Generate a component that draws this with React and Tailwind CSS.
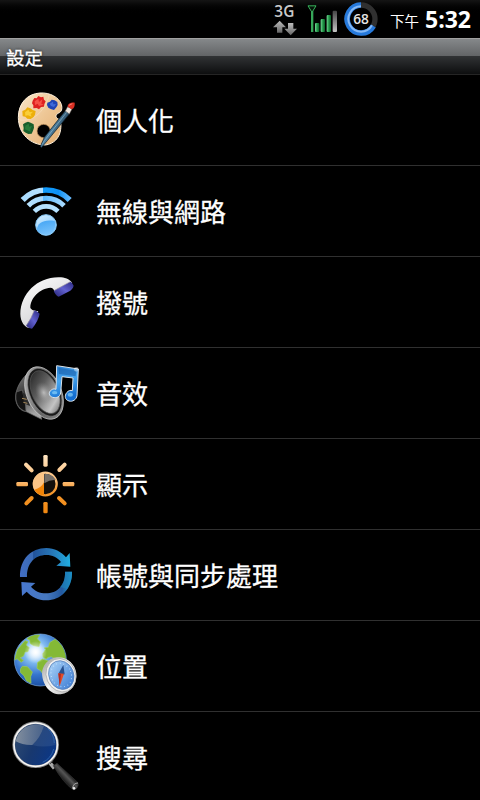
import React from 'react';

function PaletteIcon() {
  return (
    <svg viewBox="0 -15 270 270" className="w-[90px] h-[90px] flex-shrink-0">
      <defs>
        <linearGradient id="wood" x1="0" y1="0" x2="1" y2="1">
          <stop offset="0" stopColor="#fbe7cb" />
          <stop offset="0.5" stopColor="#eec796" />
          <stop offset="1" stopColor="#e3ae70" />
        </linearGradient>
        <linearGradient id="handle" x1="0" y1="0" x2="1" y2="0.6">
          <stop offset="0" stopColor="#1b3a52" />
          <stop offset="0.5" stopColor="#4d7f9f" />
          <stop offset="1" stopColor="#12283b" />
        </linearGradient>
      </defs>
      <path
        d="M120 39C150 37 177 52 184 73C188 87 184 96 176 99C167 103 165 111 173 116C183 121 184 130 182 148C179 174 161 192 136 195C92 195 55 162 55 112C55 70 82 41 120 39Z"
        fill="url(#wood)"
        stroke="#fff1dc"
        strokeWidth="3"
      />
      <path d="M60 120C95 125 133 100 148 44" stroke="#fff3e2" strokeWidth="2" opacity="0.45" fill="none" />
      <circle cx="131" cy="153" r="20" fill="#000" stroke="#c99a62" strokeWidth="2" />
      <path d="M98 62l5-8 7 1 5-7 8 4 7-2 2 9 5 5-4 9-1 7-9 1-6 7-7-4-10 1 0-9-4-6z" fill="#df2020" />
      <path d="M104 64l11-8 2 10 10-8-3 13 7 3-14 4-4-7-8 4z" fill="#ff6555" opacity="0.7" />
      <path d="M142 68l8-3 5-6 9 2 8 5 1 9-4 7-7 8-10-3-7-4-4-8z" fill="#2145b5" />
      <path d="M149 71l10-6 1 8 8-1-6 9-9-3z" fill="#4f7be8" opacity="0.7" />
      <path d="M67 93l9-4 6-7 9 3 7 5 9 3-2 11-4 7-9 6-10-1-6-6-8-1z" fill="#edaf0b" />
      <path d="M75 97l10-8 4 7 10-1-7 8 3 7-11-4-8 1z" fill="#ffdb4d" opacity="0.7" />
      <path d="M69 133l7-5 8-3 8 3 9 5 1 10-3 9-4 9-10 1-8-4-7-5 1-9z" fill="#185e2b" />
      <path d="M76 137l10-6 2 9 8-2-5 10 1 7-10-4-7-3z" fill="#2f8842" opacity="0.7" />
      <path d="M197 91L209 101L143 181L124 203L121 199L133 172Z" fill="url(#handle)" stroke="#0b1620" strokeWidth="2" />
      <path d="M200 97L133 182L126 194" stroke="#a9cfe0" strokeWidth="1.5" fill="none" />
      <path d="M203 80L216 87L208 102L196 93Z" fill="#eee6de" stroke="#6d6460" strokeWidth="1.5" />
      <path d="M203 80C203 70 214 67 224 68C225 77 222 86 215 88Z" fill="#d92f23" />
      <path d="M207 76l10-5" stroke="#ffaa9b" strokeWidth="2" />
    </svg>
  );
}

function WirelessIcon() {
  return (
    <svg viewBox="0 -12 270 270" className="w-[90px] h-[90px] flex-shrink-0">
      <defs>
        <linearGradient id="wave" gradientUnits="userSpaceOnUse" x1="65" y1="0" x2="212" y2="0">
          <stop offset="0" stopColor="#a9dcff" />
          <stop offset="0.43" stopColor="#b5e0ff" />
          <stop offset="0.44" stopColor="#129bfb" />
          <stop offset="0.75" stopColor="#0d91f5" />
          <stop offset="1" stopColor="#68bbff" />
        </linearGradient>
        <linearGradient id="wave2" gradientUnits="userSpaceOnUse" x1="80" y1="0" x2="195" y2="0">
          <stop offset="0" stopColor="#b7e2ff" />
          <stop offset="0.42" stopColor="#a5d9ff" />
          <stop offset="0.43" stopColor="#5dbaff" />
          <stop offset="1" stopColor="#abdcff" />
        </linearGradient>
        <linearGradient id="ball" x1="0" y1="0" x2="0.6" y2="1">
          <stop offset="0" stopColor="#d9f0ff" />
          <stop offset="1" stopColor="#7cc4fb" />
        </linearGradient>
        <linearGradient id="ballShade" x1="0" y1="0" x2="0.4" y2="1">
          <stop offset="0" stopColor="#2b98f2" />
          <stop offset="1" stopColor="#74c0fb" />
        </linearGradient>
      </defs>
      <path d="M68 90A98 98 0 0 1 209 90" strokeWidth="17" stroke="url(#wave)" fill="none" />
      <path d="M85 107A75 75 0 0 1 192 107" strokeWidth="15" stroke="url(#wave2)" fill="none" />
      <path d="M103 124A50 50 0 0 1 174 124" strokeWidth="14" stroke="#b4e1ff" fill="none" />
      <circle cx="138" cy="165" r="31" fill="url(#ball)" stroke="#8accfb" strokeWidth="3" />
      <path d="M110 181C113 158 130 148 164 153C171 171 157 192 138 193C125 193 115 189 110 181Z" fill="url(#ballShade)" opacity="0.85" />
    </svg>
  );
}

function PhoneIcon() {
  return (
    <svg viewBox="0 -9 270 270" className="w-[90px] h-[90px] flex-shrink-0">
      <defs>
        <linearGradient id="receiver" x1="0" y1="0" x2="0.6" y2="1">
          <stop offset="0" stopColor="#fff" />
          <stop offset="1" stopColor="#cfcfd2" />
        </linearGradient>
        <linearGradient id="earTop" x1="0" y1="1" x2="1" y2="0">
          <stop offset="0" stopColor="#242275" />
          <stop offset="0.5" stopColor="#6261cf" />
          <stop offset="1" stopColor="#29287f" />
        </linearGradient>
      </defs>
      <path
        d="M92 204C76 206 61 186 61 162C62 101 112 51 177 52C194 52 208 57 216 68L164 94C161 88 158 83 151 83C120 86 91 112 91 143C93 149 103 153 115 153Z"
        fill="url(#receiver)"
      />
      <path d="M161 92L211 65Q216 66 221 77Q218 89 205 95L176 110Q166 106 161 92Z" fill="url(#earTop)" />
      <path d="M103 151Q112 153 119 161Q115 183 96 206Q87 206 78 197Q94 176 103 151Z" fill="url(#earTop)" />
      <path d="M162 92L211 65M103 151Q94 176 79 197" stroke="#9c96a0" strokeWidth="2" fill="none" />
    </svg>
  );
}

function SoundIcon() {
  return (
    <svg viewBox="0 -6 270 270" className="w-[90px] h-[90px] flex-shrink-0">
      <defs>
        <linearGradient id="cone" x1="0.2" y1="0" x2="0.6" y2="1">
          <stop offset="0" stopColor="#262626" />
          <stop offset="0.4" stopColor="#5c5c5c" />
          <stop offset="0.85" stopColor="#c4c4c4" />
          <stop offset="1" stopColor="#888" />
        </linearGradient>
        <linearGradient id="rim" x1="0" y1="0" x2="1" y2="1">
          <stop offset="0" stopColor="#c5c5c5" />
          <stop offset="0.5" stopColor="#666" />
          <stop offset="1" stopColor="#999" />
        </linearGradient>
        <linearGradient id="frame" x1="0" y1="0" x2="0.3" y2="1">
          <stop offset="0" stopColor="#888" />
          <stop offset="0.5" stopColor="#3a3a3a" />
          <stop offset="1" stopColor="#a5a5a5" />
        </linearGradient>
        <radialGradient id="cap">
          <stop offset="0" stopColor="#c4c4c4" stopOpacity="0.9" />
          <stop offset="1" stopColor="#888" stopOpacity="0" />
        </radialGradient>
        <linearGradient id="note" x1="0" y1="0" x2="0.3" y2="1">
          <stop offset="0" stopColor="#2175c8" />
          <stop offset="0.5" stopColor="#48a7f0" />
          <stop offset="1" stopColor="#146ed0" />
        </linearGradient>
      </defs>
      <path d="M77 76C59 95 45 122 47 148C50 169 63 184 77 184L125 208L95 64Z" fill="url(#frame)" stroke="#777" strokeWidth="2" />
      <path d="M49 126C43 157 55 177 78 185L76 160L67 120Z" fill="#131313" stroke="#666" strokeWidth="2" />
      <path d="M68 128L84 135L90 168L72 160Z" fill="#2b2b2b" />
      <path d="M66 145l14 3M70 157l12 3" stroke="#a88a5a" strokeWidth="3" />
      <g transform="rotate(-24 132 129)">
        <ellipse cx="132" cy="129" rx="52" ry="83" fill="url(#rim)" stroke="#d0d0d0" strokeWidth="2" />
        <ellipse cx="135" cy="128" rx="45" ry="76" fill="#1a1a1a" stroke="#8c8c8c" strokeWidth="1.5" />
        <ellipse cx="136" cy="128" rx="39" ry="68" fill="url(#cone)" stroke="#555" strokeWidth="2" />
        <ellipse cx="132" cy="128" rx="24" ry="34" fill="url(#cap)" />
      </g>
      <path
        d="M170 47L235 57L231 137C229 149 218 156 207 153C195 150 193 137 200 128C206 121 212 120 217 122L219 84L186 80L182 129C180 140 170 145 158 142C145 138 145 126 154 120C159 116 164 116 168 118Z"
        fill="url(#note)"
        stroke="#dce3e9"
        strokeWidth="3"
        strokeLinejoin="round"
      />
      <path d="M175 53L229 62L227 79L177 72Z" fill="#195faa" opacity="0.6" />
      <ellipse cx="164" cy="128" rx="8" ry="5" fill="#99deff" opacity="0.6" />
      <ellipse cx="211" cy="134" rx="8" ry="6" fill="#99deff" opacity="0.6" />
      <circle cx="229" cy="58" r="7" fill="#fff" opacity="0.4" />
    </svg>
  );
}

function DisplayIcon() {
  return (
    <svg viewBox="0 -3 270 270" className="w-[90px] h-[90px] flex-shrink-0">
      <defs>
        <linearGradient id="sun" gradientUnits="userSpaceOnUse" x1="0" y1="45" x2="0" y2="220">
          <stop offset="0" stopColor="#ffe5c2" />
          <stop offset="0.45" stopColor="#fbbc76" />
          <stop offset="0.6" stopColor="#f59a32" />
          <stop offset="1" stopColor="#f08710" />
        </linearGradient>
      </defs>
      <g fill="url(#sun)">
        <rect x="130" y="45" width="13" height="35" rx="4" />
        <rect x="130" y="186" width="13" height="34" rx="4" />
        <rect x="49" y="126" width="35" height="13" rx="4" />
        <rect x="188" y="126" width="35" height="13" rx="4" />
      </g>
      <path
        d="M78 74L95 91M194 74L178 90M95 174L79 190M177 174L194 190"
        fill="none"
        stroke="url(#sun)"
        strokeWidth="12"
        strokeLinecap="round"
      />
      <circle cx="136" cy="132" r="34" fill="#140f0b" stroke="url(#sun)" strokeWidth="7" />
      <path d="M132 98A34 34 0 0 0 132 166Z" fill="#fbc486" />
      <path d="M132 127L132 166A34 34 0 0 1 103 149Q124 144 132 127Z" fill="#f18408" />
      <path d="M133 102C151 101 162 109 167 120Q151 118 133 130Z" fill="#777069" />
    </svg>
  );
}

function SyncIcon() {
  return (
    <svg viewBox="0 -6 270 270" className="w-[90px] h-[90px] flex-shrink-0">
      <defs>
        <linearGradient id="syncTop" x1="0" y1="0" x2="1" y2="0">
          <stop offset="0" stopColor="#426ec5" />
          <stop offset="0.25" stopColor="#3a6bb5" />
          <stop offset="0.27" stopColor="#22529a" />
          <stop offset="0.65" stopColor="#2779b9" />
          <stop offset="1" stopColor="#20aee0" />
        </linearGradient>
        <linearGradient id="syncBottom" x1="0" y1="0" x2="1" y2="0">
          <stop offset="0" stopColor="#4877ce" />
          <stop offset="0.5" stopColor="#4678bf" />
          <stop offset="0.8" stopColor="#23599f" />
          <stop offset="1" stopColor="#2099ce" />
        </linearGradient>
      </defs>
      <path
        d="M60 135C59 82 93 48 139 48C163 48 184 59 198 76L209 63L211 104L169 101L183 90C172 76 157 69 139 69C105 69 80 94 81 135Z"
        fill="url(#syncTop)"
      />
      <path
        d="M216 119C218 169 183 205 138 205C115 205 94 194 80 179L66 192L64 150L106 153L93 164C104 177 119 184 138 184C171 184 197 160 195 119Z"
        fill="url(#syncBottom)"
      />
      <path d="M216 119h-21C196 139 190 154 180 165L201 170C212 155 217 138 216 119Z" fill="#1c87bd" opacity="0.55" />
    </svg>
  );
}

function LocationIcon() {
  return (
    <svg viewBox="0 -3 270 270" className="w-[90px] h-[90px] flex-shrink-0">
      <defs>
        <radialGradient id="ocean" cx="0.4" cy="0.33" r="0.7">
          <stop offset="0" stopColor="#e9f7ff" />
          <stop offset="0.3" stopColor="#83bdf2" />
          <stop offset="0.65" stopColor="#3675cd" />
          <stop offset="1" stopColor="#184c9f" />
        </radialGradient>
        <radialGradient id="glow">
          <stop offset="0" stopColor="#fff" />
          <stop offset="1" stopColor="#fff" stopOpacity="0" />
        </radialGradient>
        <linearGradient id="steel" x1="0" y1="0" x2="1" y2="1">
          <stop offset="0" stopColor="#999" />
          <stop offset="0.5" stopColor="#f4f4f4" />
          <stop offset="1" stopColor="#aaa" />
        </linearGradient>
        <linearGradient id="dial" x1="0" y1="0" x2="0.5" y2="1">
          <stop offset="0" stopColor="#b1d8fa" />
          <stop offset="1" stopColor="#4a87d8" />
        </linearGradient>
        <clipPath id="globe">
          <circle cx="121" cy="114" r="77" />
        </clipPath>
      </defs>
      <circle cx="121" cy="114" r="78" fill="url(#ocean)" stroke="#7faee4" strokeWidth="2" />
      <g clipPath="url(#globe)" fill="#84b936" stroke="#a3cf55" strokeWidth="2">
        <path d="M43 115L52 83L75 56L84 59L78 69L88 77L84 89L75 90L70 103L60 107L70 115L64 121L51 110Z" />
        <path d="M67 133L82 134L97 150L92 164L93 184L79 176L72 161L61 151L62 140Z" />
        <path d="M81 50L95 37L119 39L112 50L121 60L117 74L101 71L91 65L89 54Z" />
        <path d="M128 95L137 82L132 78L145 76L149 62L165 52L180 59L198 93L205 119L180 108L164 110L154 104L144 106L139 111L129 106Z" />
        <path d="M113 121L127 111L148 118L160 137L151 145L139 162L128 155L122 146L111 139Z" />
      </g>
      <circle cx="107" cy="91" r="34" fill="url(#glow)" />
      <path d="M126 155C128 188 149 218 182 217C213 214 232 184 229 154C226 126 200 103 171 106C144 108 126 132 126 155Z" fill="url(#steel)" />
      <g transform="rotate(-23 182 160)">
        <ellipse cx="183" cy="160" rx="44" ry="51" fill="#f0f0f0" stroke="#a6a6a6" strokeWidth="2" />
        <ellipse cx="184" cy="160" rx="37" ry="44" fill="url(#dial)" stroke="#527bb5" strokeWidth="2" />
        <ellipse cx="184" cy="160" rx="30" ry="36" fill="none" stroke="#d9ecff" strokeWidth="3" strokeDasharray="2 9" />
      </g>
      <path d="M190 129L194 157L183 159L176 154Z" fill="#28518f" />
      <path d="M175 154L192 155L179 193Z" fill="#e14b28" />
      <path d="M175 154L183 156L179 193Z" fill="#b32921" />
    </svg>
  );
}

function SearchIcon() {
  return (
    <svg viewBox="0 0 270 270" className="w-[90px] h-[90px] flex-shrink-0">
      <defs>
        <linearGradient id="lens" x1="0" y1="0.2" x2="1" y2="0.6">
          <stop offset="0" stopColor="#314d72" />
          <stop offset="0.5" stopColor="#18386f" />
          <stop offset="1" stopColor="#0b3787" />
        </linearGradient>
        <linearGradient id="shine" x1="0" y1="0" x2="1" y2="0">
          <stop offset="0" stopColor="#929ba6" />
          <stop offset="1" stopColor="#6a7f9d" stopOpacity="0.7" />
        </linearGradient>
        <linearGradient id="grip" gradientUnits="userSpaceOnUse" x1="182" y1="199" x2="203" y2="179">
          <stop offset="0" stopColor="#151515" />
          <stop offset="0.6" stopColor="#555" />
          <stop offset="1" stopColor="#171717" />
        </linearGradient>
      </defs>
      <path d="M146 148L163 169" stroke="#aaa" strokeWidth="11" />
      <path d="M150 155l10-8" stroke="#333" strokeWidth="3" />
      <path d="M160 161L171 154L233 211Q237 217 232 226Q228 235 219 233Q190 213 160 161Z" fill="url(#grip)" stroke="#333" strokeWidth="2" />
      <path d="M218 228Q220 213 234 213" stroke="#aaa" strokeWidth="3" fill="none" />
      <circle cx="222" cy="229" r="4" fill="#eee" />
      <circle cx="107" cy="98" r="66" fill="url(#lens)" stroke="#858585" strokeWidth="8" />
      <circle cx="107" cy="98" r="65" fill="none" stroke="#f4f4f4" strokeWidth="5" />
      <path d="M46 93A62 62 0 0 1 132 42Q121 78 97 99Q68 100 46 87Z" fill="url(#shine)" opacity="0.85" />
      <path d="M132 42Q121 78 97 99Q128 108 167 99Q167 60 132 42Z" fill="#46679b" opacity="0.35" />
      <path d="M143 50Q161 64 163 93M161 111Q154 139 128 151" stroke="#3975bd" strokeWidth="3" fill="none" opacity="0.65" />
    </svg>
  );
}

function NetworkIcon() {
  return (
    <svg viewBox="0 0 78 114" className="w-[26px] h-[38px]">
      <defs>
        <linearGradient id="arrow" x1="0" y1="0" x2="0" y2="1">
          <stop offset="0" stopColor="#bcbcbc" />
          <stop offset="1" stopColor="#666" />
        </linearGradient>
      </defs>
      <text x="4" y="51" textLength="60" lengthAdjust="spacingAndGlyphs" fill="#c9c9c9" fontSize="46" fontWeight="600" fontFamily="Open Sans, sans-serif">3G</text>
      <path d="M20 62L39 82H28V98H12V82H0Z" fill="url(#arrow)" />
      <path d="M45 69H61V86H72L53 106L34 86H45Z" fill="url(#arrow)" />
    </svg>
  );
}

function SignalIcon() {
  return (
    <svg viewBox="0 0 96 114" className="w-[32px] h-[38px]">
      <defs>
        <linearGradient id="bar" x1="0" y1="0" x2="1" y2="0">
          <stop offset="0" stopColor="#74d996" />
          <stop offset="0.5" stopColor="#25984a" />
          <stop offset="1" stopColor="#096128" />
        </linearGradient>
        <linearGradient id="barOff" x1="0" y1="0" x2="0" y2="1">
          <stop offset="0" stopColor="#444" />
          <stop offset="1" stopColor="#c5c5c5" />
        </linearGradient>
      </defs>
      <path d="M3 17.5H27L15 37Z" fill="#06160b" stroke="#39b75d" strokeWidth="3" />
      <path d="M12 33h7v63h-7z" fill="#36a759" />
      <rect x="24" y="69" width="13" height="27" rx="3" fill="url(#bar)" />
      <rect x="41" y="57" width="13" height="39" rx="3" fill="url(#bar)" />
      <rect x="59" y="45" width="13" height="51" rx="3" fill="url(#bar)" />
      <rect x="77" y="32" width="13" height="64" rx="3" fill="url(#barOff)" />
    </svg>
  );
}

function BatteryRing() {
  return (
    <svg viewBox="0 0 102 114" className="w-[34px] h-[38px]">
      <circle cx="51" cy="57" r="42" fill="none" stroke="#303030" strokeWidth="16" />
      <path d="M51 15A42 42 0 1 0 88 78" fill="none" stroke="#2579dc" strokeWidth="17" />
      <path d="M51 19A38 38 0 1 0 84 76" fill="none" stroke="#86b9f5" strokeWidth="6" />
      <text x="51" y="73" textAnchor="middle" textLength="47" lengthAdjust="spacingAndGlyphs" fill="#e4e4e4" fontSize="44" fontWeight="600" fontFamily="Open Sans, sans-serif">68</text>
    </svg>
  );
}

const items = [
  { label: '個人化', Icon: PaletteIcon },
  { label: '無線與網路', Icon: WirelessIcon },
  { label: '撥號', Icon: PhoneIcon },
  { label: '音效', Icon: SoundIcon },
  { label: '顯示', Icon: DisplayIcon },
  { label: '帳號與同步處理', Icon: SyncIcon },
  { label: '位置', Icon: LocationIcon },
  { label: '搜尋', Icon: SearchIcon },
];

export default function App() {
  return (
    <div className="w-[480px] h-[800px] overflow-hidden bg-black text-white font-['Open_Sans','Noto_Sans_CJK_TC',sans-serif]">
      <header className="h-[38px] flex items-center justify-end pr-[9px] bg-gradient-to-b from-[#151515] to-black to-40%">
        <NetworkIcon />
        <div className="ml-[8px]"><SignalIcon /></div>
        <div className="ml-[5px]"><BatteryRing /></div>
        <span className="ml-[12px] w-[30px] mr-[5px] pt-[6px] text-[14.5px] leading-5 whitespace-nowrap">下午</span>
        <span className="w-[46px] text-[23px] leading-8 font-bold whitespace-nowrap">5:32</span>
      </header>

      <div className="h-[37px] flex items-center pl-[6px] border-t border-t-[#a0a0a0] border-b border-b-[#252525] bg-[linear-gradient(to_bottom,#85888a_0,#626466_49%,#303234_50%,#0d0e0f_100%)]">
        <h1 className="pt-[2px] text-[18.5px] leading-6 font-normal [-webkit-text-stroke:0.3px_white] [text-shadow:0_0_3px_#000]">設定</h1>
      </div>

      <ul>
        {items.map(({ label, Icon }) => (
          <li key={label} className="h-[91px] flex items-center border-b border-[#303030]">
            <Icon />
            <span className="ml-[6px] pt-[2px] text-[26px] leading-8 [-webkit-text-stroke:0.3px_white]">{label}</span>
          </li>
        ))}
      </ul>
    </div>
  );
}
